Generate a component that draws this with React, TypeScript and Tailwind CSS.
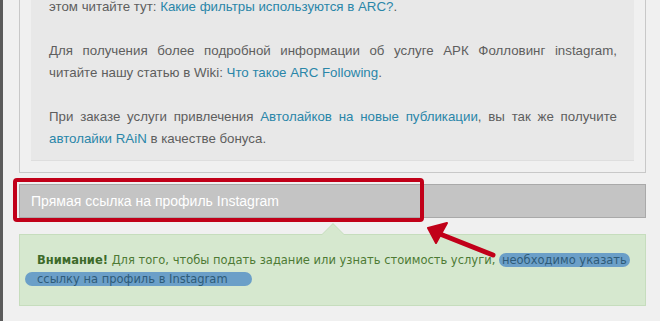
import React from "react";

const Link = ({ children }: { children: React.ReactNode }) => (
  <span className="text-[#2a86a8]">{children}</span>
);

const App = () => {
  return (
    <div className="relative flex h-[321px] w-[660px] overflow-hidden bg-[#f0f0f0]">
      {/* left dark strip of the window */}
      <div className="w-[3px] shrink-0 bg-[#5b5b5b]" />

      <div className="flex w-[643px] shrink-0 flex-col pl-[16px]">
        {/* info panel, top is scrolled off */}
        <div className="-mt-[20px] shrink-0 border border-t-0 border-[#c8c8c8] bg-[#f0f0f0] px-[11px] pb-[11px]">
          <div className="border-b border-[#dedede] bg-[#e8e8e8] pl-[18px] pr-[17px] pb-[10px] pt-[16px] text-justify font-['Liberation_Sans',Arial,sans-serif] text-[13.3px] leading-[22px] text-[#5e5e5e]">
            <p>
              этом читайте тут: <Link>Какие фильтры используются в ARC?</Link>.
            </p>
            <p className="mt-[22px]">
              <span className="block [text-align-last:justify]">
                Для получения более подробной информации об услуге АРК Фолловинг instagram,
              </span>
              читайте нашу статью в Wiki: <Link>Что такое ARC Following</Link>.
            </p>
            <p className="mt-[22px]">
              При заказе услуги привлечения <Link>Автолайков на новые публикации</Link>, вы так же
              получите <Link>автолайки RAiN</Link> в качестве бонуса.
            </p>
          </div>
        </div>

        {/* gray input bar */}
        <div className="mt-[11px] flex h-[34px] shrink-0 items-center border border-[#a9a9a9] bg-[#c4c4c4] pl-[11px] font-['Liberation_Sans',Arial,sans-serif] text-[14px] text-white">
          Прямая ссылка на профиль Instagram
        </div>

        {/* green alert with up pointer */}
        <div className="relative mt-[16px] shrink-0 border border-[#c6ddbd] bg-[#d6e8cf] pl-[17px] pr-[6px] pb-[16px] pt-[16px] font-['DejaVu_Sans',Verdana,sans-serif] text-[11.5px] leading-[19px] text-[#4d7a34]">
          <div className="absolute -top-[12px] left-[301px] h-0 w-0 border-x-[12px] border-b-[12px] border-x-transparent border-b-[#c6ddbd]" />
          <div className="absolute -top-[11px] left-[302px] h-0 w-0 border-x-[11px] border-b-[11px] border-x-transparent border-b-[#d6e8cf]" />
          <b className="text-[#3d6a2a]">Внимание!</b> Для того, чтобы подать задание или узнать
          стоимость услуги,{" "}
          <span className="whitespace-nowrap rounded-full bg-[#6b9fc8] px-[3px] text-[#2e5b78]">необходимо указать</span>
          <br />
          <span className="-ml-[12px] rounded-full bg-[#6b9fc8] pl-[12px] pr-[24px] text-[#2e5b78]">
            ссылку на профиль в Instagram
          </span>
        </div>
      </div>

      {/* red annotation frame */}
      <div className="absolute left-[13px] top-[178px] h-[44px] w-[411px] rounded-[4px] border-[4px] border-[#c10019]" />

      {/* red annotation arrow */}
      <svg className="absolute left-0 top-0" width="660" height="321" viewBox="0 0 660 321">
        <line x1="493" y1="255" x2="440" y2="234" stroke="#c10019" strokeWidth="5" strokeLinecap="round" />
        <polygon points="428,228 447,223 436,243" fill="#c10019" stroke="#c10019" strokeWidth="2" strokeLinejoin="round" />
      </svg>
    </div>
  );
};

export default App;
